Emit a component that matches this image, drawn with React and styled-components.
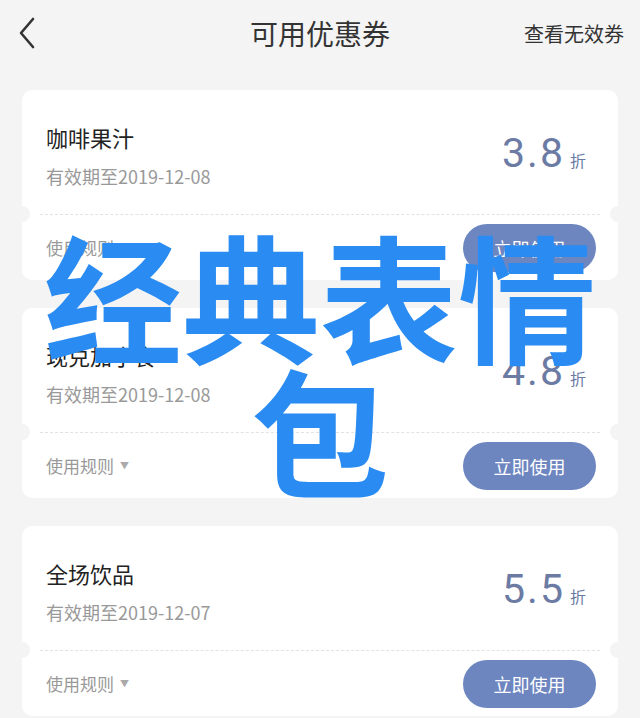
import React from 'react';
import styled, { createGlobalStyle } from 'styled-components';

const GlobalStyle = createGlobalStyle`
  html, body {
    margin: 0;
    padding: 0;
    background: #f4f4f4;
  }
  body {
    font-family: "Noto Sans CJK SC", "Noto Sans", sans-serif;
  }
`;

const coupons = [
  { name: '咖啡果汁', date: '2019-12-08', value: '3.8' },
  { name: '现兑加小食', date: '2019-12-08', value: '4.8' },
  { name: '全场饮品', date: '2019-12-07', value: '5.5' },
];

const App = () => {
  return (
    <Page>
      <GlobalStyle />
      <Header>
        <BackButton>
          <svg width="18" height="32" viewBox="0 0 18 32" fill="none">
            <path d="M15 2 L3 16 L15 30" stroke="#333" strokeWidth="2.6" strokeLinecap="round" strokeLinejoin="round" />
          </svg>
        </BackButton>
        <Title>可用优惠券</Title>
        <HeaderLink>查看无效券</HeaderLink>
      </Header>
      <List>
        {coupons.map((c) => (
          <Card key={c.value}>
            <CardTop>
              <Info>
                <Name>{c.name}</Name>
                <Expire>有效期至{c.date}</Expire>
              </Info>
              <Discount>
                <Value>{c.value}</Value>
                <Unit>折</Unit>
              </Discount>
            </CardTop>
            <Divider />
            <CardBottom>
              <Rules>使用规则 <Caret>▼</Caret></Rules>
              <UseButton>立即使用</UseButton>
            </CardBottom>
          </Card>
        ))}
      </List>
      <Watermark>经典表情<br />包</Watermark>
    </Page>
  );
};

const Page = styled.div`
  position: relative;
  width: 640px;
  height: 718px;
  overflow: hidden;
  background: #f4f4f4;
`;

const Header = styled.div`
  height: 66px;
  display: flex;
  align-items: center;
  justify-content: space-between;
  padding: 0 16px 0 16px;
  position: relative;
`;

const BackButton = styled.div`
  width: 40px;
  display: flex;
  align-items: center;
  padding-left: 2px;
`;

const Title = styled.div`
  position: absolute;
  left: 0;
  right: 0;
  text-align: center;
  font-size: 28px;
  color: #333;
  pointer-events: none;
`;

const HeaderLink = styled.div`
  font-size: 20px;
  color: #333;
`;

const List = styled.div`
  display: flex;
  flex-direction: column;
  gap: 28px;
  padding: 24px 22px 0 22px;
`;

const Card = styled.div`
  position: relative;
  background: #fff;
  border-radius: 10px;
  height: 190px;
  display: flex;
  flex-direction: column;
`;

const CardTop = styled.div`
  height: 124px;
  display: flex;
  justify-content: space-between;
  align-items: center;
  padding: 0 32px 0 24px;
`;

const Info = styled.div`
  display: flex;
  flex-direction: column;
  gap: 10px;
  padding-top: 6px;
`;

const Name = styled.div`
  font-size: 22px;
  color: #222;
`;

const Expire = styled.div`
  font-size: 18px;
  color: #999;
`;

const Discount = styled.div`
  display: flex;
  align-items: baseline;
  gap: 5px;
  padding-top: 2px;
`;

const Value = styled.div`
  font-family: "Roboto", "Liberation Sans", sans-serif;
  font-size: 41px;
  letter-spacing: 2px;
  color: #6b7ba4;
`;

const Unit = styled.div`
  font-size: 16px;
  color: #6b7ba4;
`;

const Divider = styled.div`
  position: relative;
  margin: 0 18px;
  border-top: 1px dashed #e2e2e2;
  &::before, &::after {
    content: '';
    position: absolute;
    top: -9px;
    width: 16px;
    height: 16px;
    border-radius: 50%;
    background: #f4f4f4;
  }
  &::before { left: -26px; }
  &::after { right: -26px; }
`;

const CardBottom = styled.div`
  flex: 1;
  display: flex;
  align-items: center;
  justify-content: space-between;
  padding: 0 22px 0 24px;
`;

const Rules = styled.div`
  font-size: 17px;
  color: #999;
  display: flex;
  align-items: center;
  gap: 6px;
`;

const Caret = styled.span`
  font-size: 9px;
  color: #aaa;
`;

const UseButton = styled.div`
  width: 133px;
  height: 48px;
  border-radius: 24px;
  background: #6d86c0;
  color: #fff;
  font-size: 18px;
  display: flex;
  align-items: center;
  justify-content: center;
`;

const Watermark = styled.div`
  position: absolute;
  left: 0;
  right: 0;
  top: 226px;
  text-align: center;
  font-size: 138px;
  line-height: 134px;
  font-weight: 700;
  color: #2a8cf2;
  pointer-events: none;
`;

export default App;
